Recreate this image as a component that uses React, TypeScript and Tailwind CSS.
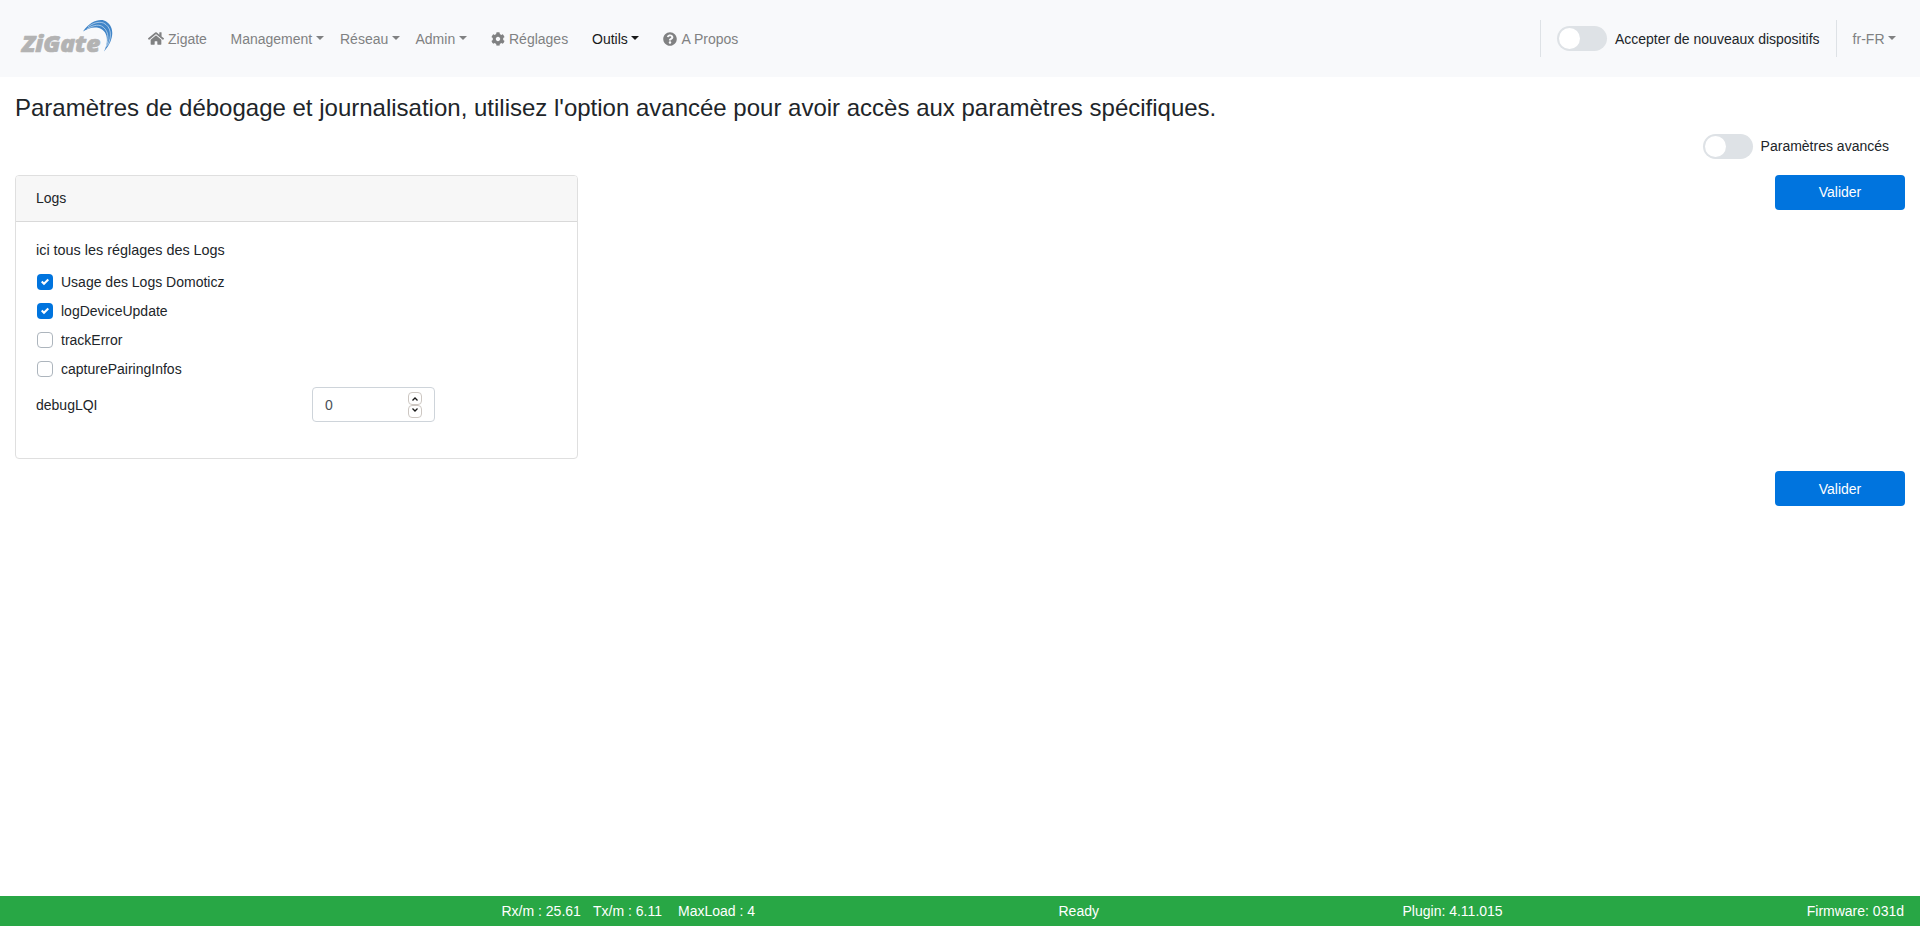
import type { ReactNode } from "react";
import { FaCog, FaHome, FaQuestionCircle } from "react-icons/fa";

function Logo() {
  return (
    <svg width="100" height="41" viewBox="15 18 100 41" className="shrink-0" aria-label="ZiGate">
      <text
        x="22"
        y="52"
        textLength="78.5"
        lengthAdjust="spacingAndGlyphs"
        fontSize="23"
        fontWeight="800"
        fontStyle="italic"
        fill="#b3b3b3"
        stroke="#b3b3b3"
        strokeWidth="0.7"
        strokeLinejoin="round"
        className="font-['Open_Sans',sans-serif]"
      >
        ZiGate
      </text>
      <path
        d="M83 31.500C89 22.500 98 18.800 104 20.500C114 24 116 38 104 51.500C109.500 40 107 30.500 99 28C93 26.500 87.500 28.500 83 31.500Z"
        fill="#4085c8"
      />
      <g fill="none" stroke="#e8f1fa" strokeWidth="0.6">
        <path d="M88 27C93 22.900 99 21.300 103.500 23C111 26.500 112.500 36 107.500 45.500" />
        <path d="M87 29C92.500 25.500 97.500 24.300 101.500 26C108 29.500 109.800 38 106 47" />
      </g>
    </svg>
  );
}

function Caret() {
  return <span className="mb-[3px] ml-[3.5px] h-0 w-0 border-x-[4.200px] border-t-[4.200px] border-x-transparent border-t-current" />;
}

function NavItem({ className, children }: { className: string; children: ReactNode }) {
  return <a className={`flex shrink-0 items-center pt-0.5 whitespace-nowrap ${className}`}>{children}</a>;
}

function Toggle({ label, labelClass = "" }: { label: string; labelClass?: string }) {
  return (
    <label className="flex items-center gap-2 whitespace-nowrap">
      <span className="h-[25px] w-[50px] rounded-full bg-[#dee2e6] p-[2px]">
        <span className="block size-[21px] rounded-full bg-white" />
      </span>
      <span className={labelClass}>{label}</span>
    </label>
  );
}

function Check({ label, checked = false }: { label: string; checked?: boolean }) {
  return (
    <label className="flex h-[29px] items-start gap-2 pt-[5px]">
      {checked ? (
        <span className="mt-0.5 flex size-4 items-center justify-center rounded bg-[#0074de]">
          <svg width="8" height="8" viewBox="0 0 8 8" fill="#fff">
            <path d="M6.564.75l-3.590 3.612-1.538-1.550L0 4.260 2.974 7.250 8 2.193z" />
          </svg>
        </span>
      ) : (
        <span className="mt-0.5 size-4 rounded border border-[#adb5bd] bg-white" />
      )}
      {label}
    </label>
  );
}

function Submit({ className = "" }: { className?: string }) {
  return <button className={`h-[35px] w-[130px] shrink-0 rounded-[4px] bg-[#0074de] text-white ${className}`}>Valider</button>;
}

function SpinButton({ up = false }: { up?: boolean }) {
  return (
    <span className={`flex h-[13px] w-[14px] justify-center rounded-[4px] border border-[#cdc7c2] bg-white ${up ? "pt-1" : "pt-[2px]"}`}>
      <svg width="6" height="4" viewBox="0 0 6 4" fill="none" stroke="#1a1a1a" strokeWidth="1.300">
        <path d={up ? "M.5 3.500L3 1L5.500 3.500" : "M.5 .5L3 3L5.500 .5"} />
      </svg>
    </span>
  );
}

export default function App() {
  return (
    <div className="flex h-[926px] w-full flex-col overflow-hidden bg-white font-['Liberation_Sans',Arial,sans-serif] text-[14px] leading-[21px] text-[#212529]">
      <nav className="flex h-[77px] shrink-0 items-center bg-[#f8f9fb] pr-6 pl-[15px] text-[#808182]">
        <Logo />
        <NavItem className="ml-[33px] w-[82.5px]">
          <FaHome className="mr-[4px] mb-0.5 h-[15px] w-4" />
          Zigate
        </NavItem>
        <NavItem className="w-[109.5px]">
          Management
          <Caret />
        </NavItem>
        <NavItem className="w-[75.5px]">
          Réseau
          <Caret />
        </NavItem>
        <NavItem className="w-[75.5px]">
          Admin
          <Caret />
        </NavItem>
        <NavItem className="w-[101px]">
          <FaCog className="mr-[4px] mb-0.5 size-[14px]" />
          Réglages
        </NavItem>
        <NavItem className="w-[71px] text-[#191a1a]">
          Outils
          <Caret />
        </NavItem>
        <NavItem className="">
          <FaQuestionCircle className="mr-[4.5px] mb-0.5 size-[14px]" />A Propos
        </NavItem>
        <div className="ml-auto flex h-[37px] items-center">
          <div className="flex h-full items-center border-l border-[#dee2e6] pr-4 pl-4 text-[#212529]">
            <Toggle label="Accepter de nouveaux dispositifs" labelClass="pt-0.5" />
          </div>
          <div className="flex h-full items-center border-l border-[#dee2e6] pl-4">
            <NavItem className="">
              fr-FR
              <Caret />
            </NavItem>
          </div>
        </div>
      </nav>

      <main className="flex flex-1 flex-col px-[15px] pt-[15px]">
        <h1 className="h-[42px] text-[24px] leading-[32px]">
          Paramètres de débogage et journalisation, utilisez l'option avancée pour avoir accès aux paramètres spécifiques.
        </h1>
        <div className="flex h-[41px] items-start justify-end pr-4">
          <Toggle label="Paramètres avancés" />
        </div>
        <div className="flex items-start justify-between">
          <section className="h-[284px] w-[563px] rounded-[4px] border border-[#dfdfdf]">
            <header className="flex h-[46px] items-center rounded-t-[3px] border-b border-[#d9d9d9] bg-[#f7f7f7] px-5">Logs</header>
            <div className="flex flex-col px-5 pt-[18px]">
              <p className="mb-[6px] h-[21px] text-[14.400px]">ici tous les réglages des Logs</p>
              <div className="flex flex-col pl-px">
                <Check label="Usage des Logs Domoticz" checked />
                <Check label="logDeviceUpdate" checked />
                <Check label="trackError" />
                <Check label="capturePairingInfos" />
              </div>
              <div className="mt-1 flex items-center">
                <span className="w-[276px] pt-0.5">debugLQI</span>
                <div className="flex h-[35px] w-[123px] items-center justify-between rounded-[4px] border border-[#ced4da] pr-3 pl-3 text-[#495057]">
                  <span className="pt-0.5">0</span>
                  <span className="flex flex-col">
                    <SpinButton up />
                    <SpinButton />
                  </span>
                </div>
              </div>
            </div>
          </section>
          <Submit />
        </div>
        <div className="mt-3 flex justify-end">
          <Submit className="pt-0.5" />
        </div>
      </main>

      <footer className="flex h-[30px] shrink-0 items-center bg-[#28a745] pr-4 pl-[501.5px] text-white">
        <div className="flex w-[557px] whitespace-pre">
          <span className="w-[91.5px]">Rx/m : 25.61</span>
          <span className="w-[85px]">Tx/m : 6.11</span>
          <span>MaxLoad : 4</span>
        </div>
        <span className="w-[344px]">Ready</span>
        <span>Plugin: 4.11.015</span>
        <span className="ml-auto">Firmware: 031d</span>
      </footer>
    </div>
  );
}
